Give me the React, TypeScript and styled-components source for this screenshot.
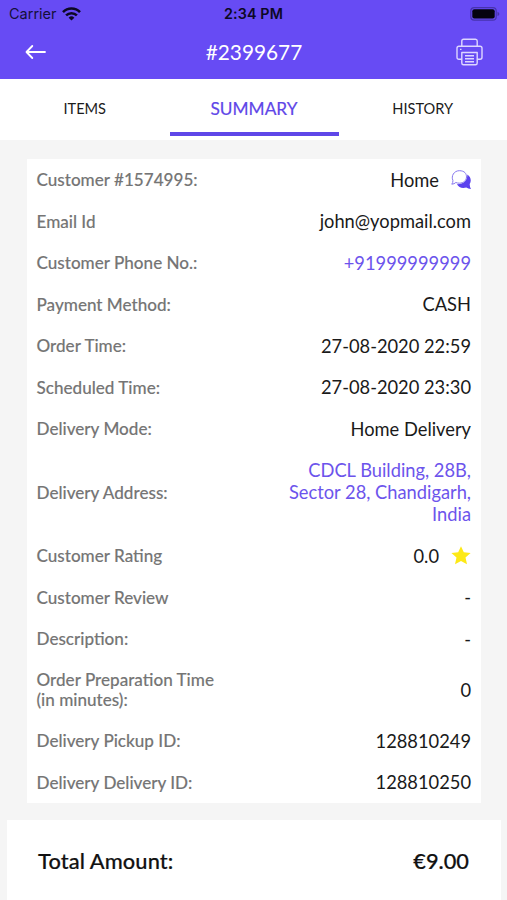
import React from "react";
import styled, { createGlobalStyle } from "styled-components";

const violet = "#674bf4";

const GlobalStyle = createGlobalStyle`
  * { box-sizing: border-box; }
  body { margin: 0; background: #f5f5f5; font-family: Lato, "Open Sans", sans-serif; }
`;

const Screen = styled.div`
  width: 507px;
  height: 900px;
  overflow: hidden;
  display: flex;
  flex-direction: column;
`;

const Header = styled.header`
  height: 79px;
  flex: none;
  background: ${violet};
`;

const StatusBar = styled.div`
  height: 27px;
  padding: 0 7px 0 9px;
  display: grid;
  grid-template-columns: 1fr auto 1fr;
  align-items: center;
  font-family: Inter, sans-serif;
  font-size: 14.5px;
  color: #15103a;
`;

const Carrier = styled.div`
  display: flex;
  align-items: center;
  gap: 5px;
`;

const Clock = styled.div`
  margin-right: 2px;
  font-weight: 600;
  font-size: 14.3px;
  letter-spacing: 0.15px;
  color: #0c0824;
`;

const BatterySlot = styled.div`
  display: flex;
  justify-content: flex-end;
`;

const TitleBar = styled.div`
  height: 50px;
  padding: 0 24px 0 25px;
  display: grid;
  grid-template-columns: 1fr auto 1fr;
  align-items: center;
  color: #fff;

  & > svg:last-child { justify-self: end; }
`;

const Title = styled.h1`
  margin: 0;
  font-weight: 400;
  font-size: 20.8px;
  line-height: 26px;
`;

const Tabs = styled.nav`
  height: 61px;
  flex: none;
  display: grid;
  grid-template-columns: 169.5px 169px 1fr;
  background: #fff;
`;

const Tab = styled.div<{ $active?: boolean }>`
  height: 57px;
  padding-top: 5px;
  display: flex;
  align-items: center;
  justify-content: center;
  border-bottom: 4px solid ${(p) => (p.$active ? "#5f47e8" : "transparent")};
  color: ${(p) => (p.$active ? "#5f47e8" : "#1c1c1c")};
  font-size: ${(p) => (p.$active ? "17.3px" : "14.6px")};
  -webkit-text-stroke: ${(p) => (p.$active ? "0.2px #5f47e8" : "0")};
`;

const Card = styled.section`
  flex: none;
  margin: 19px 26px 0 26.5px;
  background: #fff;
`;

const Row = styled.div`
  min-height: 41.5px;
  padding: 9.75px 10px;
  display: flex;
  align-items: center;
  justify-content: space-between;
`;

const Label = styled.div`
  width: 190px;
  padding-top: 0.5px;
  margin-bottom: -0.5px;
  color: #757575;
  font-size: 17.1px;
  line-height: 20.5px;
  font-weight: 500;
  -webkit-text-stroke: 0.12px #757575;
`;

const Value = styled.div<{ $link?: boolean }>`
  width: 200px;
  display: flex;
  align-items: center;
  justify-content: flex-end;
  gap: 12px;
  text-align: right;
  font-size: 18.3px;
  line-height: 22px;
  color: ${(p) => (p.$link ? "#6c54ec" : "#1a1a1a")};
`;

const Total = styled.section`
  flex: 1;
  margin: 17px 6px 0 7px;
  padding: 28px 32px 0 31px;
  display: flex;
  justify-content: space-between;
  background: #fff;
  color: #111;
  font-size: 21.8px;
  line-height: 26px;
  font-weight: 500;
  -webkit-text-stroke: 0.2px #111;
`;

const TotalLabel = styled.span`
  letter-spacing: 0.1px;
`;

const WifiIcon = () => (
  <svg width="19" height="14" viewBox="0 0 19 14" fill="none" stroke="#0c0824" strokeWidth="2.6">
    <path d="M1 5.1A12 12 0 0 1 18 5.1" />
    <path d="M4.1 8.4A7.7 7.7 0 0 1 14.9 8.4" />
    <path d="M9.5 13.6 6.6 10.7A4.1 4.1 0 0 1 12.4 10.7Z" fill="#0c0824" stroke="none" />
  </svg>
);

const BatteryIcon = () => (
  <svg width="30" height="14" viewBox="0 0 30 14">
    <rect x="0.8" y="0.7" width="25.4" height="12.4" rx="3.4" fill="none" stroke="#4733ad" strokeWidth="1.2" />
    <rect x="2.3" y="2.2" width="22.4" height="9.4" rx="2" fill="#05030f" />
    <path d="M27.5 4.8Q29.4 5.6 29.4 6.9T27.5 9Z" fill="#4733ad" />
  </svg>
);

const BackIcon = () => (
  <svg width="22" height="16" viewBox="0 0 22 16" fill="none" stroke="#fff" strokeWidth="1.8" strokeLinecap="round" strokeLinejoin="round">
    <path d="M20 8H1.7M7.3 2 1.5 8l5.8 6" />
  </svg>
);

const PrinterIcon = () => (
  <svg width="27" height="28" viewBox="0 0 27 28" fill="none" stroke="#ddd6ff" strokeWidth="1.4" strokeLinejoin="round">
    <path d="M5.8 8V3Q5.8 1.2 7.5 1.2H19.5Q21.2 1.2 21.2 3V8" />
    <path d="M5.8 21.3H3Q1 21.3 1 19.3V10.2Q1 8.2 3 8.2H24Q26 8.2 26 10.2V19.3Q26 21.3 24 21.3H21.2" />
    <path d="M5.8 14.5H21.2V25Q21.2 26.8 19.5 26.8H7.5Q5.8 26.8 5.8 25Z" />
    <path d="M9 17.8H18M9 20.8H18M9 23.8H18M4 11.4H5.5" />
  </svg>
);

const ChatIcon = () => (
  <svg width="20" height="20" viewBox="0 0 20 20">
    <path d="M16.3 4.6C19.6 6.6 20.8 10.6 18.7 14Q18.6 16.8 20 18.9Q17 18.8 15.3 17.6C11.5 18.8 7.6 17.8 5.9 14.1C12 14.5 16.6 10.4 16.3 4.6Z" fill="#5b41ee" />
    <path d="M.8 14.2Q2.1 12.5 1.9 10.4C-.1 6.3 2.9.7 8.3.7S15.5 3.7 15.5 6.9S12.8 13.2 8.3 13.2Q6.5 13.2 4.8 12.5Q3.2 14.1.8 14.2Z" fill="#fff" stroke="#8878ee" strokeWidth="1" />
  </svg>
);

const StarIcon = () => (
  <svg width="20" height="19" viewBox="0 0 20 19">
    <path d="M10 .2 12.8 6.3 19.6 7 14.5 11.5 16 18.3 10 14.9 4 18.3 5.5 11.5.4 7 7.2 6.3Z" fill="#fde916" />
  </svg>
);

type Detail = { label: React.ReactNode; value: React.ReactNode; link?: boolean; icon?: React.ReactNode };

const details: Detail[] = [
  { label: "Customer #1574995:", value: "Home", icon: <ChatIcon /> },
  { label: "Email Id", value: "john@yopmail.com" },
  { label: "Customer Phone No.:", value: "+91999999999", link: true },
  { label: "Payment Method:", value: "CASH" },
  { label: "Order Time:", value: "27-08-2020 22:59" },
  { label: "Scheduled Time:", value: "27-08-2020 23:30" },
  { label: "Delivery Mode:", value: "Home Delivery" },
  { label: "Delivery Address:", value: <>CDCL Building, 28B,<br />Sector 28, Chandigarh,<br />India</>, link: true },
  { label: "Customer Rating", value: "0.0", icon: <StarIcon /> },
  { label: "Customer Review", value: "-" },
  { label: "Description:", value: "-" },
  { label: <>Order Preparation Time<br />(in minutes):</>, value: "0" },
  { label: "Delivery Pickup ID:", value: "128810249" },
  { label: "Delivery Delivery ID:", value: "128810250" },
];

export default function App() {
  return (
    <Screen>
      <GlobalStyle />
      <Header>
        <StatusBar>
          <Carrier><span>Carrier</span><WifiIcon /></Carrier>
          <Clock>2:34 PM</Clock>
          <BatterySlot><BatteryIcon /></BatterySlot>
        </StatusBar>
        <TitleBar>
          <BackIcon />
          <Title>#2399677</Title>
          <PrinterIcon />
        </TitleBar>
      </Header>
      <Tabs>
        <Tab>ITEMS</Tab>
        <Tab $active>SUMMARY</Tab>
        <Tab>HISTORY</Tab>
      </Tabs>
      <Card>
        {details.map((d, i) => (
          <Row key={i}>
            <Label>{d.label}</Label>
            <Value $link={d.link}><span>{d.value}</span>{d.icon}</Value>
          </Row>
        ))}
      </Card>
      <Total><TotalLabel>Total Amount:</TotalLabel><span>€9.00</span></Total>
    </Screen>
  );
}
